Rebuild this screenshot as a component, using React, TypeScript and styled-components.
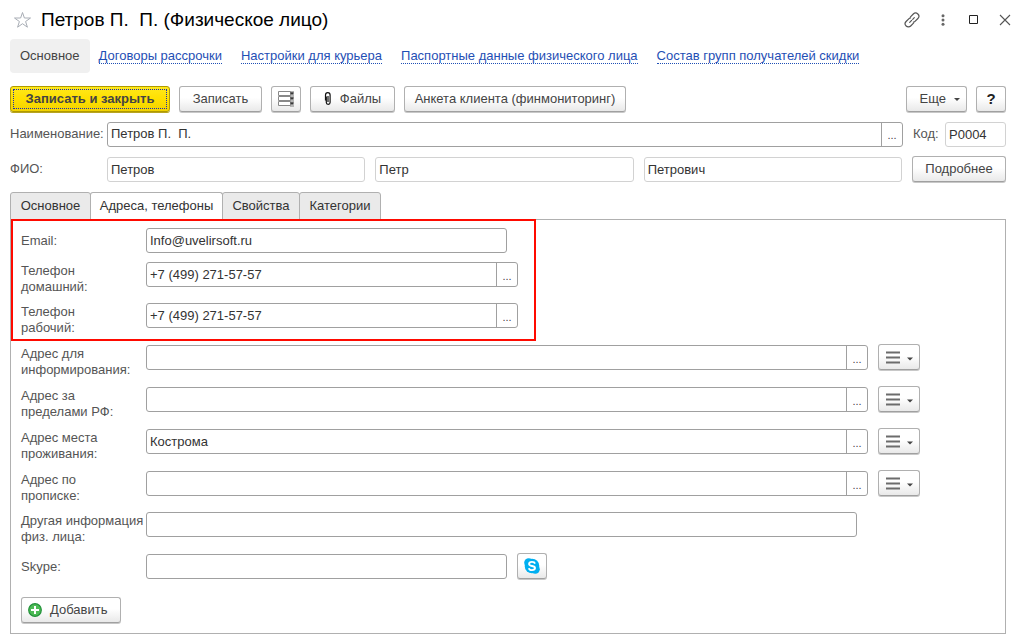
import React from 'react';
import styled, { createGlobalStyle } from 'styled-components';

const GlobalStyle = createGlobalStyle`
  *, *::before, *::after { box-sizing: border-box; }
  body {
    margin: 0;
    background: #fff;
    color: #444;
    font: 13px/16px "Liberation Sans", Arial, sans-serif;
  }
  button, input { font: inherit; color: inherit; margin: 0; }
  svg { flex: none; display: block; }
`;

const Page = styled.main`
  padding: 0 15px 10px 10px;
`;

const TitleBar = styled.header`
  display: flex;
  align-items: center;
  height: 39px;
  padding-left: 2px;
`;

const Title = styled.h1`
  flex: 1;
  margin: 0 0 0 9px;
  color: #000;
  font-size: 19px;
  line-height: 24px;
  font-weight: 400;
  white-space: pre;
`;

const WindowActions = styled.div`
  display: flex;
  gap: 11px;
  margin-right: -9px;
`;

const IconButton = styled.button`
  display: flex;
  align-items: center;
  justify-content: center;
  width: 20px;
  height: 20px;
  padding: 0;
  border: 0;
  background: none;
`;

const Nav = styled.nav`
  display: flex;
  align-items: center;
  gap: 19px;
  height: 34px;
`;

const NavCurrent = styled.span`
  padding: 9px 10px;
  margin-right: -10px;
  border-radius: 4px;
  background: #f0f0f0;
`;

const NavLink = styled.a`
  color: #1f4fb5;
  line-height: 14px;
  text-decoration: none;
  border-bottom: 1px dotted #1f4fb5;
  white-space: nowrap;
`;

const Toolbar = styled.div`
  display: flex;
  gap: 9px;
  margin-top: 13px;
`;

const Spacer = styled.div`
  flex: 1;
`;

const Button = styled.button<{ $width: number; $align?: 'start' | 'end' }>`
  display: flex;
  flex: none;
  align-items: center;
  justify-content: ${(p) => p.$align ?? 'center'};
  gap: 8px;
  width: ${(p) => p.$width}px;
  height: 26px;
  padding: 0 6px;
  border: 1px solid #b0b0b0;
  border-bottom-color: #a0a0a0;
  border-radius: 3px;
  background: linear-gradient(#fff 45%, #e9e9e9);
  box-shadow: 0 1px 0 #c8c8c8;
  white-space: nowrap;
`;

const PrimaryButton = styled(Button)`
  border-color: #b09a00;
  background: linear-gradient(#ffe81c, #ffe000 50%, #f2d200);
  box-shadow: 0 1px 0 #b8a420;
  font-weight: 700;
  outline: 1px dotted #1a2fb0;
  outline-offset: -4px;
`;

const HelpMark = styled.span`
  color: #222;
  font-size: 15px;
  font-weight: 700;
`;

const HeaderRow = styled.div`
  display: flex;
  align-items: center;
  gap: 10px;
  height: 26px;
  margin-top: 9px;
`;

const HeaderField = styled.div`
  display: flex;
  flex: 1;
  align-items: center;
  min-width: 0;
`;

const HeaderLabel = styled.label`
  flex: none;
  width: 97px;
  color: #555;
`;

const CodeField = styled.div`
  display: flex;
  flex: none;
  align-items: center;
  justify-content: space-between;
  width: 93px;
  color: #555;
`;

const NameInputs = styled.div`
  display: flex;
  flex: 1;
  gap: 10px;
  min-width: 0;
`;

const TextInput = styled.input<{ $width?: number; $light?: boolean }>`
  flex: ${(p) => (p.$width ? '0 1 auto' : '1 1 0')};
  width: ${(p) => (p.$width ? `${p.$width}px` : 'auto')};
  min-width: 0;
  height: 25px;
  padding: 0 3px;
  border: 1px solid ${(p) => (p.$light ? '#d2d2d2' : '#a0a0a0')};
  border-radius: 3px;
  background: #fff;
  color: #333;
  outline: 0;
`;

const Combo = styled.div<{ $width?: number }>`
  display: flex;
  flex: ${(p) => (p.$width ? '0 1 auto' : '1 1 0')};
  width: ${(p) => (p.$width ? `${p.$width}px` : 'auto')};
  min-width: 0;
  height: 25px;
  border: 1px solid #a0a0a0;
  border-radius: 3px;
  background: #fff;
`;

const ComboInput = styled.input`
  flex: 1;
  min-width: 0;
  padding: 0 3px;
  border: 0;
  background: none;
  color: #333;
  outline: 0;
`;

const ComboButton = styled.button`
  width: 21px;
  padding: 2px 0 0;
  border: 0;
  border-left: 1px solid #a0a0a0;
  background: none;
  font-size: 11px;
`;

const Tabs = styled.div`
  display: flex;
  margin-top: 10px;
`;

const Tab = styled.button<{ $width: number; $active?: boolean }>`
  position: relative;
  z-index: ${(p) => (p.$active ? 1 : 0)};
  width: ${(p) => p.$width}px;
  height: 28px;
  margin: 0 -1px -1px 0;
  padding: 0;
  border: 1px solid #b0b0b0;
  border-bottom-color: ${(p) => (p.$active ? '#fff' : '#b0b0b0')};
  border-radius: 3px 3px 0 0;
  background: ${(p) => (p.$active ? '#fff' : '#eaeaea')};
  color: #333;
  white-space: nowrap;
`;

const Panel = styled.section`
  padding-bottom: 10px;
  border: 1px solid #b0b0b0;
`;

const HighlightedGroup = styled.div`
  position: relative;
  z-index: 2;
  display: flex;
  flex-direction: column;
  gap: 7px;
  width: 525px;
  max-width: 100%;
  margin-top: -1px;
  padding: 6px 8px 3px;
  border: 2px solid #ff0a00;
`;

const FieldGroup = styled.div<{ $top: number }>`
  display: flex;
  flex-direction: column;
  gap: 8px;
  padding: ${(p) => p.$top}px 10px 0;
`;

const FieldRow = styled.div`
  display: flex;
  align-items: flex-start;
`;

const FieldLabel = styled.label<{ $single?: boolean }>`
  flex: none;
  width: 125px;
  padding-top: ${(p) => (p.$single ? 6 : 2)}px;
  color: #555;
  white-space: pre-line;
`;

const FieldLine = styled.div<{ $indent?: number }>`
  display: flex;
  flex: 1;
  align-items: flex-start;
  gap: 10px;
  min-width: 0;
  height: 27px;
  margin-right: ${(p) => p.$indent ?? 0}px;

  ${TextInput}, ${Combo} {
    margin-top: 1px;
  }
`;

const Footer = styled.div`
  padding: 17px 10px 0;
`;

const Caret = () => (
  <svg width="6" height="4" viewBox="0 0 6 4" aria-hidden="true">
    <path d="M0 1h6L3 4z" fill="#444" />
  </svg>
);

const ListCaretIcon = () => (
  <svg width="28" height="13" viewBox="0 0 28 13" aria-hidden="true">
    <path d="M1 1.500h14M1 6.500h14M1 11.500h14" stroke="#6c6c6c" strokeWidth="2" />
    <path d="M22 6.500h6L25 9.500z" fill="#444" />
  </svg>
);

const StarIcon = () => (
  <svg width="19" height="18" viewBox="0 0 19 18" aria-hidden="true">
    <path
      d="M9.500 1.500l1.900 5.500h6.100l-4.900 3.500 1.800 5.700-4.900-3.500-4.900 3.500 1.800-5.700L1.500 7h6.100z"
      fill="none"
      stroke="#a8adb5"
    />
  </svg>
);

const LinkIcon = () => (
  <svg width="16" height="16" viewBox="0 0 16 16" fill="none" stroke="#555" strokeWidth="1.200" strokeLinecap="round" aria-hidden="true">
    <path d="M6.500 4.800l2.800-2.800a3.200 3.200 0 0 1 4.600 4.500l-2.900 2.900a3 3 0 0 1-1.600.8" />
    <path d="M9.500 11.200l-2.800 2.800a3.200 3.200 0 0 1-4.600-4.500l2.900-2.900a3 3 0 0 1 1.600-.8" />
    <path d="M5.700 10.300l1.900-1.900M8.700 7.300l1.600-1.600" />
  </svg>
);

const DotsIcon = () => (
  <svg width="4" height="12" viewBox="0 0 4 12" fill="#666" aria-hidden="true">
    <circle cx="2" cy="1.700" r="1.500" />
    <circle cx="2" cy="6" r="1.500" />
    <circle cx="2" cy="10.300" r="1.500" />
  </svg>
);

const MaximizeIcon = () => (
  <svg width="10" height="10" viewBox="0 0 10 10" aria-hidden="true">
    <path d="M.5.5h8v8h-8z" fill="none" stroke="#222" />
  </svg>
);

const CloseIcon = () => (
  <svg width="12" height="12" viewBox="0 0 12 12" aria-hidden="true">
    <path d="M1 1l10 10M11 1L1 11" stroke="#555" strokeWidth="1.100" />
  </svg>
);

const RegisterIcon = () => (
  <svg width="16" height="16" viewBox="0 0 16 16" aria-hidden="true">
    <path d="M12 0h4v16h-4z" fill="#b5b5b5" />
    <path d="M.5.5h12v4H.5zM.5 5.500h12v4H.5zM.5 10.500h12v4H.5z" fill="#fff" stroke="#888" />
    <path d="M12.500 1.500h3v1h-1v1h-1v-1h-1zM12.500 6.500h3v1h-1v1h-1v-1h-1zM12.500 11.500h3v1h-1v1h-1v-1h-1z" fill="#111" />
  </svg>
);

const ClipIcon = () => (
  <svg width="8" height="14" viewBox="0 0 8 14" fill="none" stroke="#111" aria-hidden="true">
    <path d="M1.500 8.500V3a2.300 2.300 0 0 1 4.600 0v7.500a1.900 1.900 0 0 1-3.800 0V4.500M4 4v6" strokeWidth="1.200" />
  </svg>
);

const SkypeIcon = () => (
  <svg width="16" height="16" viewBox="0 0 16 16" aria-hidden="true">
    <circle cx="8" cy="8" r="7.300" fill="#00aff0" />
    <circle cx="4.700" cy="4.700" r="4.500" fill="#00aff0" />
    <circle cx="11.300" cy="11.300" r="4.500" fill="#00aff0" />
    <path
      d="M11 5.600C10.600 4.300 9.400 3.900 8 3.900c-1.600 0-2.900.7-2.900 2 0 2.900 5.900 1.300 5.900 4.100 0 1.400-1.300 2.100-3 2.100-1.600 0-2.800-.6-3.200-1.900"
      fill="none"
      stroke="#fff"
      strokeWidth="1.900"
    />
  </svg>
);

const AddIcon = () => (
  <svg width="14" height="14" viewBox="0 0 14 14" aria-hidden="true">
    <circle cx="7" cy="7" r="6.300" fill="#4dbb55" stroke="#22913a" strokeWidth="1.200" />
    <path d="M7 3v8M3 7h8" stroke="#fff" strokeWidth="2" />
  </svg>
);

const links = [
  'Договоры рассрочки',
  'Настройки для курьера',
  'Паспортные данные физического лица',
  'Состав групп получателей скидки',
];

const phones = [
  { id: 'home', label: 'Телефон\nдомашний:', value: '+7 (499) 271-57-57' },
  { id: 'work', label: 'Телефон\nрабочий:', value: '+7 (499) 271-57-57' },
];

const addresses = [
  { id: 'inform', label: 'Адрес для\nинформирования:', value: '' },
  { id: 'abroad', label: 'Адрес за\nпределами РФ:', value: '' },
  { id: 'living', label: 'Адрес места\nпроживания:', value: 'Кострома' },
  { id: 'registered', label: 'Адрес по\nпрописке:', value: '' },
];

type ComboFieldProps = { id: string; value: string; width?: number };

const ComboField = ({ id, value, width }: ComboFieldProps) => (
  <Combo $width={width}>
    <ComboInput id={id} defaultValue={value} />
    <ComboButton type="button" aria-label="Выбрать">...</ComboButton>
  </Combo>
);

export default function App() {
  return (
    <Page>
      <GlobalStyle />
      <TitleBar>
        <IconButton aria-label="Избранное"><StarIcon /></IconButton>
        <Title>{'Петров П.  П. (Физическое лицо)'}</Title>
        <WindowActions>
          <IconButton aria-label="Ссылка"><LinkIcon /></IconButton>
          <IconButton aria-label="Меню"><DotsIcon /></IconButton>
          <IconButton aria-label="Развернуть"><MaximizeIcon /></IconButton>
          <IconButton aria-label="Закрыть"><CloseIcon /></IconButton>
        </WindowActions>
      </TitleBar>

      <Nav>
        <NavCurrent>Основное</NavCurrent>
        {links.map((text) => (
          <NavLink key={text} href="#">{text}</NavLink>
        ))}
      </Nav>

      <Toolbar>
        <PrimaryButton type="button" $width={160}>Записать и закрыть</PrimaryButton>
        <Button type="button" $width={83}>Записать</Button>
        <Button type="button" $width={30} aria-label="Регистр"><RegisterIcon /></Button>
        <Button type="button" $width={85}><ClipIcon />Файлы</Button>
        <Button type="button" $width={222}>Анкета клиента (финмониторинг)</Button>
        <Spacer />
        <Button type="button" $width={61} $align="end"><span>Еще</span><Caret /></Button>
        <Button type="button" $width={30}><HelpMark>?</HelpMark></Button>
      </Toolbar>

      <HeaderRow>
        <HeaderField>
          <HeaderLabel htmlFor="name">Наименование:</HeaderLabel>
          <ComboField id="name" value="Петров П.  П." />
        </HeaderField>
        <CodeField>
          <label htmlFor="code">Код:</label>
          <TextInput id="code" $width={61} $light defaultValue="Р0004" />
        </CodeField>
      </HeaderRow>

      <HeaderRow>
        <HeaderField>
          <HeaderLabel htmlFor="surname">ФИО:</HeaderLabel>
          <NameInputs>
            <TextInput id="surname" $light defaultValue="Петров" />
            <TextInput aria-label="Имя" $light defaultValue="Петр" />
            <TextInput aria-label="Отчество" $light defaultValue="Петрович" />
          </NameInputs>
        </HeaderField>
        <Button type="button" $width={94}>Подробнее</Button>
      </HeaderRow>

      <Tabs role="tablist">
        <Tab role="tab" $width={81}>Основное</Tab>
        <Tab role="tab" $width={133} $active aria-selected>Адреса, телефоны</Tab>
        <Tab role="tab" $width={78}>Свойства</Tab>
        <Tab role="tab" $width={82}>Категории</Tab>
      </Tabs>

      <Panel>
        <HighlightedGroup>
          <FieldRow>
            <FieldLabel $single htmlFor="email">Email:</FieldLabel>
            <FieldLine>
              <TextInput id="email" $width={361} defaultValue="Info@uvelirsoft.ru" />
            </FieldLine>
          </FieldRow>
          {phones.map((f) => (
            <FieldRow key={f.id}>
              <FieldLabel htmlFor={f.id}>{f.label}</FieldLabel>
              <FieldLine>
                <ComboField id={f.id} value={f.value} width={372} />
              </FieldLine>
            </FieldRow>
          ))}
        </HighlightedGroup>

        <FieldGroup $top={3}>
          {addresses.map((f) => (
            <FieldRow key={f.id}>
              <FieldLabel htmlFor={f.id}>{f.label}</FieldLabel>
              <FieldLine $indent={75}>
                <ComboField id={f.id} value={f.value} />
                <Button type="button" $width={42} aria-label="Действия"><ListCaretIcon /></Button>
              </FieldLine>
            </FieldRow>
          ))}
        </FieldGroup>

        <FieldGroup $top={7}>
          <FieldRow>
            <FieldLabel htmlFor="other">{'Другая информация\nфиз. лица:'}</FieldLabel>
            <FieldLine $indent={138}>
              <TextInput id="other" />
            </FieldLine>
          </FieldRow>
          <FieldRow>
            <FieldLabel $single htmlFor="skype">Skype:</FieldLabel>
            <FieldLine>
              <TextInput id="skype" $width={361} />
              <Button type="button" $width={30} aria-label="Skype"><SkypeIcon /></Button>
            </FieldLine>
          </FieldRow>
        </FieldGroup>

        <Footer>
          <Button type="button" $width={100} $align="start"><AddIcon /><span>Добавить</span></Button>
        </Footer>
      </Panel>
    </Page>
  );
}
